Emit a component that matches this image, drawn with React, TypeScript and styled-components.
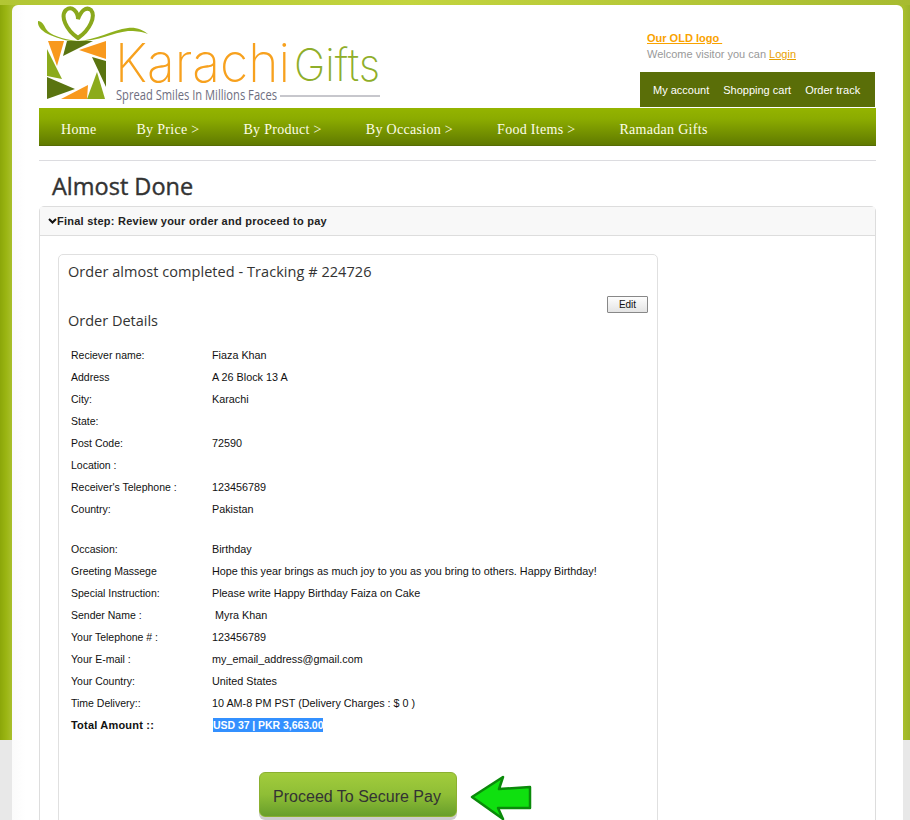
import styled, { createGlobalStyle } from 'styled-components'

const GlobalStyle = createGlobalStyle`
  html, body {
    margin: 0;
    padding: 0;
    background: #e8e8e8;
  }
`

const navigation = ['Home', 'By Price >', 'By Product >', 'By Occasion >', 'Food Items >', 'Ramadan Gifts']

const accountLinks = ['My account', 'Shopping cart', 'Order track']

const receiverRows = [
  ['Reciever name:', 'Fiaza Khan'],
  ['Address', 'A 26 Block 13 A'],
  ['City:', 'Karachi'],
  ['State:', ''],
  ['Post Code:', '72590'],
  ['Location :', ''],
  ["Receiver's Telephone :", '123456789'],
  ['Country:', 'Pakistan'],
]

const senderRows = [
  ['Occasion:', 'Birthday'],
  ['Greeting Massege', 'Hope this year brings as much joy to you as you bring to others. Happy Birthday!'],
  ['Special Instruction:', 'Please write Happy Birthday Faiza on Cake'],
  ['Sender Name :', '\u00a0Myra Khan'],
  ['Your Telephone # :', '123456789'],
  ['Your E-mail :', 'my_email_address@gmail.com'],
  ['Your Country:', 'United States'],
  ['Time Delivery::', '10 AM-8 PM PST (Delivery Charges : $ 0 )'],
]

const Logo = () => (
  <LogoSvg viewBox='37 5 360 103' xmlns='http://www.w3.org/2000/svg'>
    <path fill='none' stroke='#8aa81c' strokeWidth='4' d='M78 38C66 30 60 16 66 10C72 5 78 12 78 19C81 11 86 6 91 10C96 16 90 30 78 38Z' />
    <path fill='#8fb01e' d='M78 41C62 39 50 35 46 29C44 25 42 21 38 21C37 27 43 32 50 35C60 39 70 42 78 41Z' />
    <path fill='#8fb01e' d='M78 41C96 40 112 30 128 28C136 27 143 30 148 34C140 31 135 31 128 31C112 33 96 42 78 41Z' />
    <polygon fill='#f8991d' points='48,41 64,41 57,66' />
    <polygon fill='#5a7410' points='67,41 93,41 63,56' />
    <polygon fill='#f8991d' points='106,41 106,59 79,50' />
    <polygon fill='#5a7410' points='92,57 106,61 106,87' />
    <polygon fill='#8cab1c' points='97,72 105,99 87,99' />
    <polygon fill='#f8991d' points='88,85 87,99 61,99' />
    <polygon fill='#5a7410' points='47,77 75,89 47,99' />
    <polygon fill='#8cab1c' points='47,49 62,79 47,76' />
    <text x='115' y='82' fontFamily='Inter, sans-serif' fontWeight='200' fontSize='54' fill='#f7a11e' textLength='175' lengthAdjust='spacingAndGlyphs'>
      Karachi
    </text>
    <text x='294' y='81' fontFamily='Inter, sans-serif' fontWeight='200' fontSize='45' fill='#8fae2a' textLength='86' lengthAdjust='spacingAndGlyphs'>
      Gifts
    </text>
    <text x='116' y='100' fontFamily="'Open Sans', sans-serif" fontSize='14' fill='#6e6e80' textLength='161' lengthAdjust='spacingAndGlyphs'>
      Spread Smiles In Millions Faces
    </text>
    <line x1='280' y1='96' x2='380' y2='96' stroke='#8f8f9a' strokeWidth='1' />
  </LogoSvg>
)

const App = (): JSX.Element => {
  const renderRows = (rows: string[][]) =>
    rows.map(([label, value]) => (
      <DetailRow key={label}>
        <span>{label}</span>
        <Value>{value}</Value>
      </DetailRow>
    ))

  return (
    <>
      <GlobalStyle />
      <Page>
        <Panel>
          <Header>
            <Logo />
            <HeaderRight>
              <OldLogo href='#'>Our OLD logo&nbsp;</OldLogo>
              <Welcome>
                Welcome visitor you can <a href='#'>Login</a>
              </Welcome>
              <AccountBar>
                {accountLinks.map(link => (
                  <AccountLink key={link}>{link}</AccountLink>
                ))}
              </AccountBar>
            </HeaderRight>
          </Header>

          <Nav>
            {navigation.map(item => (
              <NavItem key={item}>{item}</NavItem>
            ))}
          </Nav>

          <Divider />
          <Title>Almost Done</Title>

          <Accordion>
            <AccordionHead>
              <svg width='9' height='6' viewBox='0 0 9 6' xmlns='http://www.w3.org/2000/svg'>
                <path d='M1 1l3.5 3.5L8 1' fill='none' stroke='#111' strokeWidth='2' />
              </svg>
              Final step: Review your order and proceed to pay
            </AccordionHead>
            <AccordionBody>
              <Card>
                <CardTitle>Order almost completed - Tracking # 224726</CardTitle>
                <EditRow>
                  <EditButton>Edit</EditButton>
                </EditRow>
                <SubTitle>Order Details</SubTitle>
                <Details>
                  {renderRows(receiverRows)}
                  <Spacer />
                  {renderRows(senderRows)}
                  <DetailRow>
                    <TotalLabel>Total Amount ::</TotalLabel>
                    <Selected>USD 37 | PKR 3,663.00</Selected>
                  </DetailRow>
                </Details>
                <PayRow>
                  <PayButton>Proceed To Secure Pay</PayButton>
                  <PayArrow width='62' height='46' viewBox='0 0 62 46' xmlns='http://www.w3.org/2000/svg'>
                    <path d='M2 22L33 2L29 14L60 12V33L28 33L33 44Z' fill='#0fe00f' stroke='#0a8a0a' strokeWidth='2.5' strokeLinejoin='round' />
                  </PayArrow>
                </PayRow>
              </Card>
            </AccordionBody>
          </Accordion>
        </Panel>
      </Page>
    </>
  )
}

export default App

const Page = styled.div`
  height: 820px;
  overflow: hidden;
  box-sizing: border-box;
  padding: 5px 7px 0 12px;
  background-color: #e8e8e8;
  background-image:
    linear-gradient(90deg, #b2c634, #c3d43e 45%, #a7bb30),
    linear-gradient(90deg, #8ba60a 0, #9ab512 6px, #a9bf2c 12px, #a9bf2c 903px, #9cb42a 910px);
  background-size: 100% 5px, 100% 740px;
  background-repeat: no-repeat;
`

const Panel = styled.div`
  box-sizing: border-box;
  height: 900px;
  padding: 0 27px;
  background: linear-gradient(90deg, #fbfbfb, #fff 14px);
  border-radius: 6px 6px 0 0;
`

const Header = styled.header`
  display: flex;
  justify-content: space-between;
  height: 103px;
`

const LogoSvg = styled.svg`
  width: 360px;
  height: 103px;
  margin-left: -2px;
`

const HeaderRight = styled.div`
  display: flex;
  flex-direction: column;
  width: 235px;
  margin-right: 1px;
  padding-top: 27px;
  font: 11px 'Liberation Sans', Arial, sans-serif;
`

const OldLogo = styled.a`
  margin-left: 7px;
  height: 16px;
  line-height: 13px;
  font-weight: bold;
  color: #f9a200;
`

const Welcome = styled.div`
  margin-left: 7px;
  height: 24px;
  line-height: 13px;
  color: #999;

  a {
    color: #e8a000;
  }
`

const AccountBar = styled.div`
  display: flex;
  align-items: center;
  gap: 14px;
  height: 35px;
  padding-left: 13px;
  background: #5a6e08;
`

const AccountLink = styled.span`
  color: #fff;
`

const Nav = styled.nav`
  display: flex;
  align-items: center;
  gap: 44px;
  box-sizing: border-box;
  height: 38px;
  padding: 7px 0 0 22px;
  background: linear-gradient(#94b400, #8bab00 30%, #607a00);
  border-bottom: 1px solid #566c04;
`

const NavItem = styled.span`
  font: 14px 'Liberation Serif', 'Times New Roman', serif;
  letter-spacing: 0.3px;
  color: #fdfde8;

  &:first-child {
    margin-right: -4px;
  }
`

const Divider = styled.hr`
  height: 1px;
  margin: 14px 0 0;
  border: 0;
  background: #dcdce0;
`

const Title = styled.h1`
  margin: 0;
  height: 45px;
  padding-left: 13px;
  font: 400 23.5px/50px 'Open Sans', sans-serif;
  -webkit-text-stroke: 0.4px #333;
  color: #333;
`

const Accordion = styled.section`
  border: 1px solid #ddd;
  border-radius: 5px 5px 0 0;
`

const AccordionHead = styled.div`
  display: flex;
  align-items: center;
  box-sizing: border-box;
  height: 29px;
  padding-left: 8px;
  background: #f8f8f8;
  border-bottom: 1px solid #ddd;
  font: bold 11px 'Liberation Sans', Arial, sans-serif;
  letter-spacing: 0.25px;
  color: #222;
`

const AccordionBody = styled.div`
  padding: 18px 0 0 18px;
`

const Card = styled.div`
  box-sizing: border-box;
  width: 600px;
  padding: 0 9px;
  border: 1px solid #e0e0e0;
  border-radius: 5px 5px 0 0;
`

const CardTitle = styled.h2`
  margin: 0;
  height: 41px;
  font: 14.5px/34px 'Open Sans', sans-serif;
  letter-spacing: 0.05px;
  color: #333;
`

const EditRow = styled.div`
  display: flex;
  justify-content: flex-end;
`

const EditButton = styled.button`
  box-sizing: border-box;
  width: 41px;
  height: 17px;
  padding: 0;
  border: 1px solid #888;
  border-radius: 1px;
  background: linear-gradient(#fdfdfd, #e4e4e4);
  font: 10px 'Liberation Sans', Arial, sans-serif;
  color: #111;
`

const SubTitle = styled.h3`
  margin: 0;
  height: 31px;
  font: 14.5px/16px 'Open Sans', sans-serif;
  color: #333;
`

const Details = styled.div`
  padding-left: 3px;
`

const DetailRow = styled.div`
  display: grid;
  grid-template-columns: 141px 1fr;
  height: 22px;
  align-items: center;
  font: 10.5px 'Liberation Sans', Arial, sans-serif;
  color: #111;
  white-space: pre;
`

const Value = styled.span`
  font-size: 10.8px;
`

const TotalLabel = styled.span`
  font-size: 11px;
  font-weight: bold;
  letter-spacing: 0.2px;
`

const Spacer = styled.div`
  height: 18px;
`

const Selected = styled.span`
  justify-self: start;
  margin-left: 1px;
  padding: 1px 0;
  background: #3390ff;
  font-weight: bold;
  letter-spacing: -0.05px;
  color: #fff;
`

const PayRow = styled.div`
  display: flex;
  align-items: flex-start;
  gap: 13px;
  margin: 36px 0 0 191px;
`

const PayButton = styled.button`
  box-sizing: border-box;
  width: 198px;
  height: 45px;
  padding: 4px 2px 0 0;
  border: 1px solid #8bb030;
  border-radius: 6px;
  background: linear-gradient(#a2cc3c, #8fbe36 50%, #689e2b);
  box-shadow: 0 3px 0 #ccc;
  font: 16px 'Liberation Sans', Arial, sans-serif;
  color: #333;
`

const PayArrow = styled.svg`
  margin-top: 3px;
`
